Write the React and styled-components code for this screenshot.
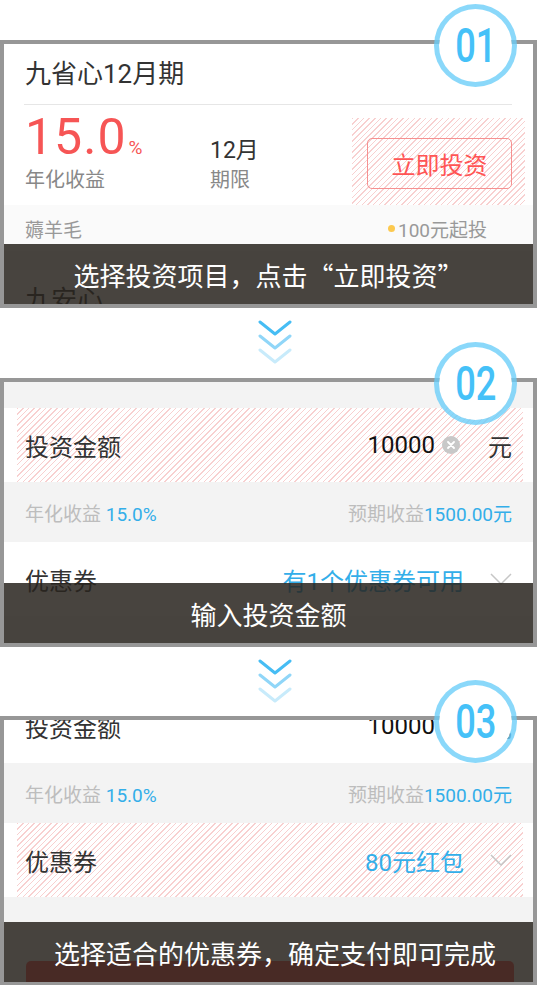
import React from "react";
import styled, { createGlobalStyle } from "styled-components";

const GlobalStyle = createGlobalStyle`
  html, body {
    margin: 0;
    padding: 0;
    background: #fff;
  }
  body {
    font-family: Roboto, "Noto Sans CJK SC", sans-serif;
  }
`;

const Page = styled.div`
  width: 537px;
  padding-top: 40px;
`;

const Step = styled.section`
  position: relative;
`;

const Frame = styled.div`
  position: relative;
  box-sizing: border-box;
  height: ${(p) => p.$h}px;
  border: 4px solid #979797;
  overflow: hidden;
  background: #f3f3f3;
`;

const Badge = styled.div`
  position: absolute;
  top: -36px;
  right: 20px;
  z-index: 2;
  box-sizing: border-box;
  width: 83px;
  height: 83px;
  border-radius: 50%;
  border: 5px solid rgba(105, 205, 249, 0.78);
  background: #fff;
  background-clip: padding-box;
  display: flex;
  align-items: center;
  justify-content: center;
`;

const BadgeNum = styled.span`
  font-family: Roboto, sans-serif;
  font-weight: 500;
  font-size: 49px;
  line-height: 1;
  color: #45c1f8;
  transform: scaleX(0.74);
`;

const Caption = styled.div`
  position: absolute;
  left: 0;
  right: 0;
  bottom: 0;
  height: 60px;
  box-sizing: border-box;
  padding-left: ${(p) => p.$shift || 0}px;
  background: rgba(40, 35, 29, 0.85);
  color: #fff;
  font-family: "Noto Sans CJK SC", sans-serif;
  font-size: 26px;
  display: flex;
  align-items: center;
  justify-content: center;
`;

const Hatch = styled.div`
  background: repeating-linear-gradient(
    135deg,
    #f8d0d0 0 1px,
    #fff 1px 4px
  );
`;

/* ---------- step 1 : product card ---------- */

const Card = styled.div`
  background: #fff;
`;

const CardTitle = styled.div`
  height: 60px;
  box-sizing: border-box;
  padding: 0 21px 6px;
  display: flex;
  align-items: center;
  font-size: 26px;
  color: #333;
`;

const Divider = styled.div`
  height: 1px;
  margin: 0 21px 0 20px;
  background: #e6e6e6;
`;

const Stats = styled.div`
  display: flex;
  height: 100px;
`;

const Stat = styled.div`
  width: ${(p) => p.$w}px;
  box-sizing: border-box;
  padding: 0 0 15px ${(p) => p.$pl}px;
  display: flex;
  flex-direction: column;
  justify-content: flex-end;
`;

const Rate = styled.div`
  display: flex;
  align-items: baseline;
  color: #f65555;
  line-height: 1;
`;

const RateNum = styled.span`
  font-size: 50px;
  letter-spacing: 1px;
`;

const RateUnit = styled.span`
  font-size: 19px;
  margin-left: 2px;
`;

const Term = styled.div`
  font-size: 23px;
  line-height: 1;
  color: #333;
  margin-bottom: 8px;
`;

const StatLabel = styled.div`
  font-size: 20px;
  line-height: 1;
  color: #888;
  margin-top: ${(p) => p.$mt || 0}px;
`;

const BuyArea = styled(Hatch)`
  width: 173px;
  margin: 13px 8px 0 auto;
  box-sizing: border-box;
  padding: 20px 0 0 15px;
`;

const OutlineButton = styled.button`
  width: 145px;
  height: 51px;
  padding: 0;
  border: 1px solid #f69191;
  border-radius: 5px;
  background: transparent;
  color: #f55;
  font-family: inherit;
  font-size: 24px;
`;

const Tags = styled.div`
  height: 46px;
  box-sizing: border-box;
  padding: 0 46px 0 21px;
  background: #fafafa;
  display: flex;
  align-items: center;
  justify-content: space-between;
  font-size: 19px;
  color: #999;
`;

const Start = styled.span`
  display: flex;
  align-items: center;
`;

const Dot = styled.i`
  width: 7px;
  height: 7px;
  border-radius: 50%;
  background: #fcc94f;
  margin-right: 3px;
`;

const Spacer = styled.div`
  height: ${(p) => p.$h}px;
`;

/* ---------- steps 2 & 3 : invest form ---------- */

const Form = styled.div`
  margin-top: ${(p) => p.$offset || 0}px;
`;

const Row = styled.div`
  height: 74px;
  background: #fff;
  display: flex;
`;

const RowBody = styled.div`
  flex: 1;
  display: flex;
  align-items: center;
  margin: 0 10px 0 13px;
  padding: 0 11px 0 8px;
  font-size: 24px;
  color: #333;
`;

const HatchBody = styled(Hatch)`
  flex: 1;
  display: flex;
  align-items: center;
  margin: 0 10px 0 13px;
  padding: 0 11px 0 8px;
  font-size: 24px;
  color: #333;
`;

const RowLabel = styled.span`
  flex: 1;
`;

const Amount = styled.span`
  color: #111;
`;

const Clear = styled.span`
  width: 18px;
  height: 18px;
  margin-left: 7px;
  border-radius: 50%;
  background: #c8c8c8;
  display: flex;
  align-items: center;
  justify-content: center;
`;

const Unit = styled.span`
  margin-left: 28px;
`;

const Blue = styled.span`
  color: #33aee9;
`;

const Caret = styled.svg`
  margin-left: 26px;
  flex: none;
`;

const Yield = styled.div`
  height: 60px;
  box-sizing: border-box;
  padding: 0 21px;
  background: #f3f3f3;
  display: flex;
  align-items: center;
  justify-content: space-between;
  font-size: 19px;
  color: #bdbdbd;
`;

const PayButton = styled.div`
  height: 50px;
  margin: 0 19px 0 22px;
  border-radius: 5px;
  background: #f55;
`;

const ArrowBox = styled.div`
  height: ${(p) => p.$h}px;
  box-sizing: border-box;
  padding: 12px 0 0 13px;
  display: flex;
  justify-content: center;
`;

const Arrows = ({ h }) => (
  <ArrowBox $h={h}>
    <svg width="34" height="44" viewBox="0 0 34 44" fill="none" strokeWidth="3" strokeLinecap="round" strokeLinejoin="round">
      <polyline points="2,2 17,14 32,2" stroke="#46bdf4" />
      <polyline points="2,16 17,28 32,16" stroke="#90d6f8" />
      <polyline points="2,30 17,42 32,30" stroke="#c8ebfb" />
    </svg>
  </ArrowBox>
);

const CaretDown = () => (
  <Caret width="22" height="12" viewBox="0 0 22 12" fill="none">
    <polyline points="1,1 11,11 21,1" stroke="#c6c6c6" strokeWidth="1.5" />
  </Caret>
);

const ClearIcon = () => (
  <Clear>
    <svg width="8" height="8" viewBox="0 0 8 8">
      <path d="M1 1 L7 7 M7 1 L1 7" stroke="#fff" strokeWidth="1.8" strokeLinecap="round" />
    </svg>
  </Clear>
);

const YieldRow = () => (
  <Yield>
    <span>
      年化收益 <Blue>15.0%</Blue>
    </span>
    <span>
      预期收益<Blue>1500.00元</Blue>
    </span>
  </Yield>
);

const AmountContent = () => (
  <>
    <RowLabel>投资金额</RowLabel>
    <Amount>10000</Amount>
    <ClearIcon />
    <Unit>元</Unit>
  </>
);

const CouponContent = ({ text }) => (
  <>
    <RowLabel>优惠券</RowLabel>
    <Blue>{text}</Blue>
    <CaretDown />
  </>
);

export default function App() {
  return (
    <Page>
      <GlobalStyle />

      <Step>
        <Frame $h={268}>
          <Card>
            <CardTitle>九省心12月期</CardTitle>
            <Divider />
            <Stats>
              <Stat $w={202} $pl={21}>
                <Rate>
                  <RateNum>15.0</RateNum>
                  <RateUnit>%</RateUnit>
                </Rate>
                <StatLabel $mt={8}>年化收益</StatLabel>
              </Stat>
              <Stat $w={146} $pl={4}>
                <Term>12月</Term>
                <StatLabel>期限</StatLabel>
              </Stat>
              <BuyArea>
                <OutlineButton>立即投资</OutlineButton>
              </BuyArea>
            </Stats>
            <Tags>
              <span>薅羊毛</span>
              <Start>
                <Dot />
                100元起投
              </Start>
            </Tags>
          </Card>
          <Spacer $h={19} />
          <Card>
            <CardTitle>九安心</CardTitle>
          </Card>
          <Caption>选择投资项目，点击“立即投资”</Caption>
        </Frame>
        <Badge>
          <BadgeNum>01</BadgeNum>
        </Badge>
      </Step>

      <Arrows h={70} />

      <Step>
        <Frame $h={269}>
          <Form>
            <Spacer $h={26} />
            <Row>
              <HatchBody>
                <AmountContent />
              </HatchBody>
            </Row>
            <YieldRow />
            <Row>
              <RowBody>
                <CouponContent text="有1个优惠券可用" />
              </RowBody>
            </Row>
          </Form>
          <Caption>输入投资金额</Caption>
        </Frame>
        <Badge>
          <BadgeNum>02</BadgeNum>
        </Badge>
      </Step>

      <Arrows h={69} />

      <Step>
        <Frame $h={270}>
          <Form $offset={-31}>
            <Row>
              <RowBody>
                <AmountContent />
              </RowBody>
            </Row>
            <YieldRow />
            <Row>
              <HatchBody>
                <CouponContent text="80元红包" />
              </HatchBody>
            </Row>
            <Spacer $h={64} />
            <PayButton />
          </Form>
          <Caption $shift={13}>选择适合的优惠券，确定支付即可完成</Caption>
        </Frame>
        <Badge>
          <BadgeNum>03</BadgeNum>
        </Badge>
      </Step>
    </Page>
  );
}
